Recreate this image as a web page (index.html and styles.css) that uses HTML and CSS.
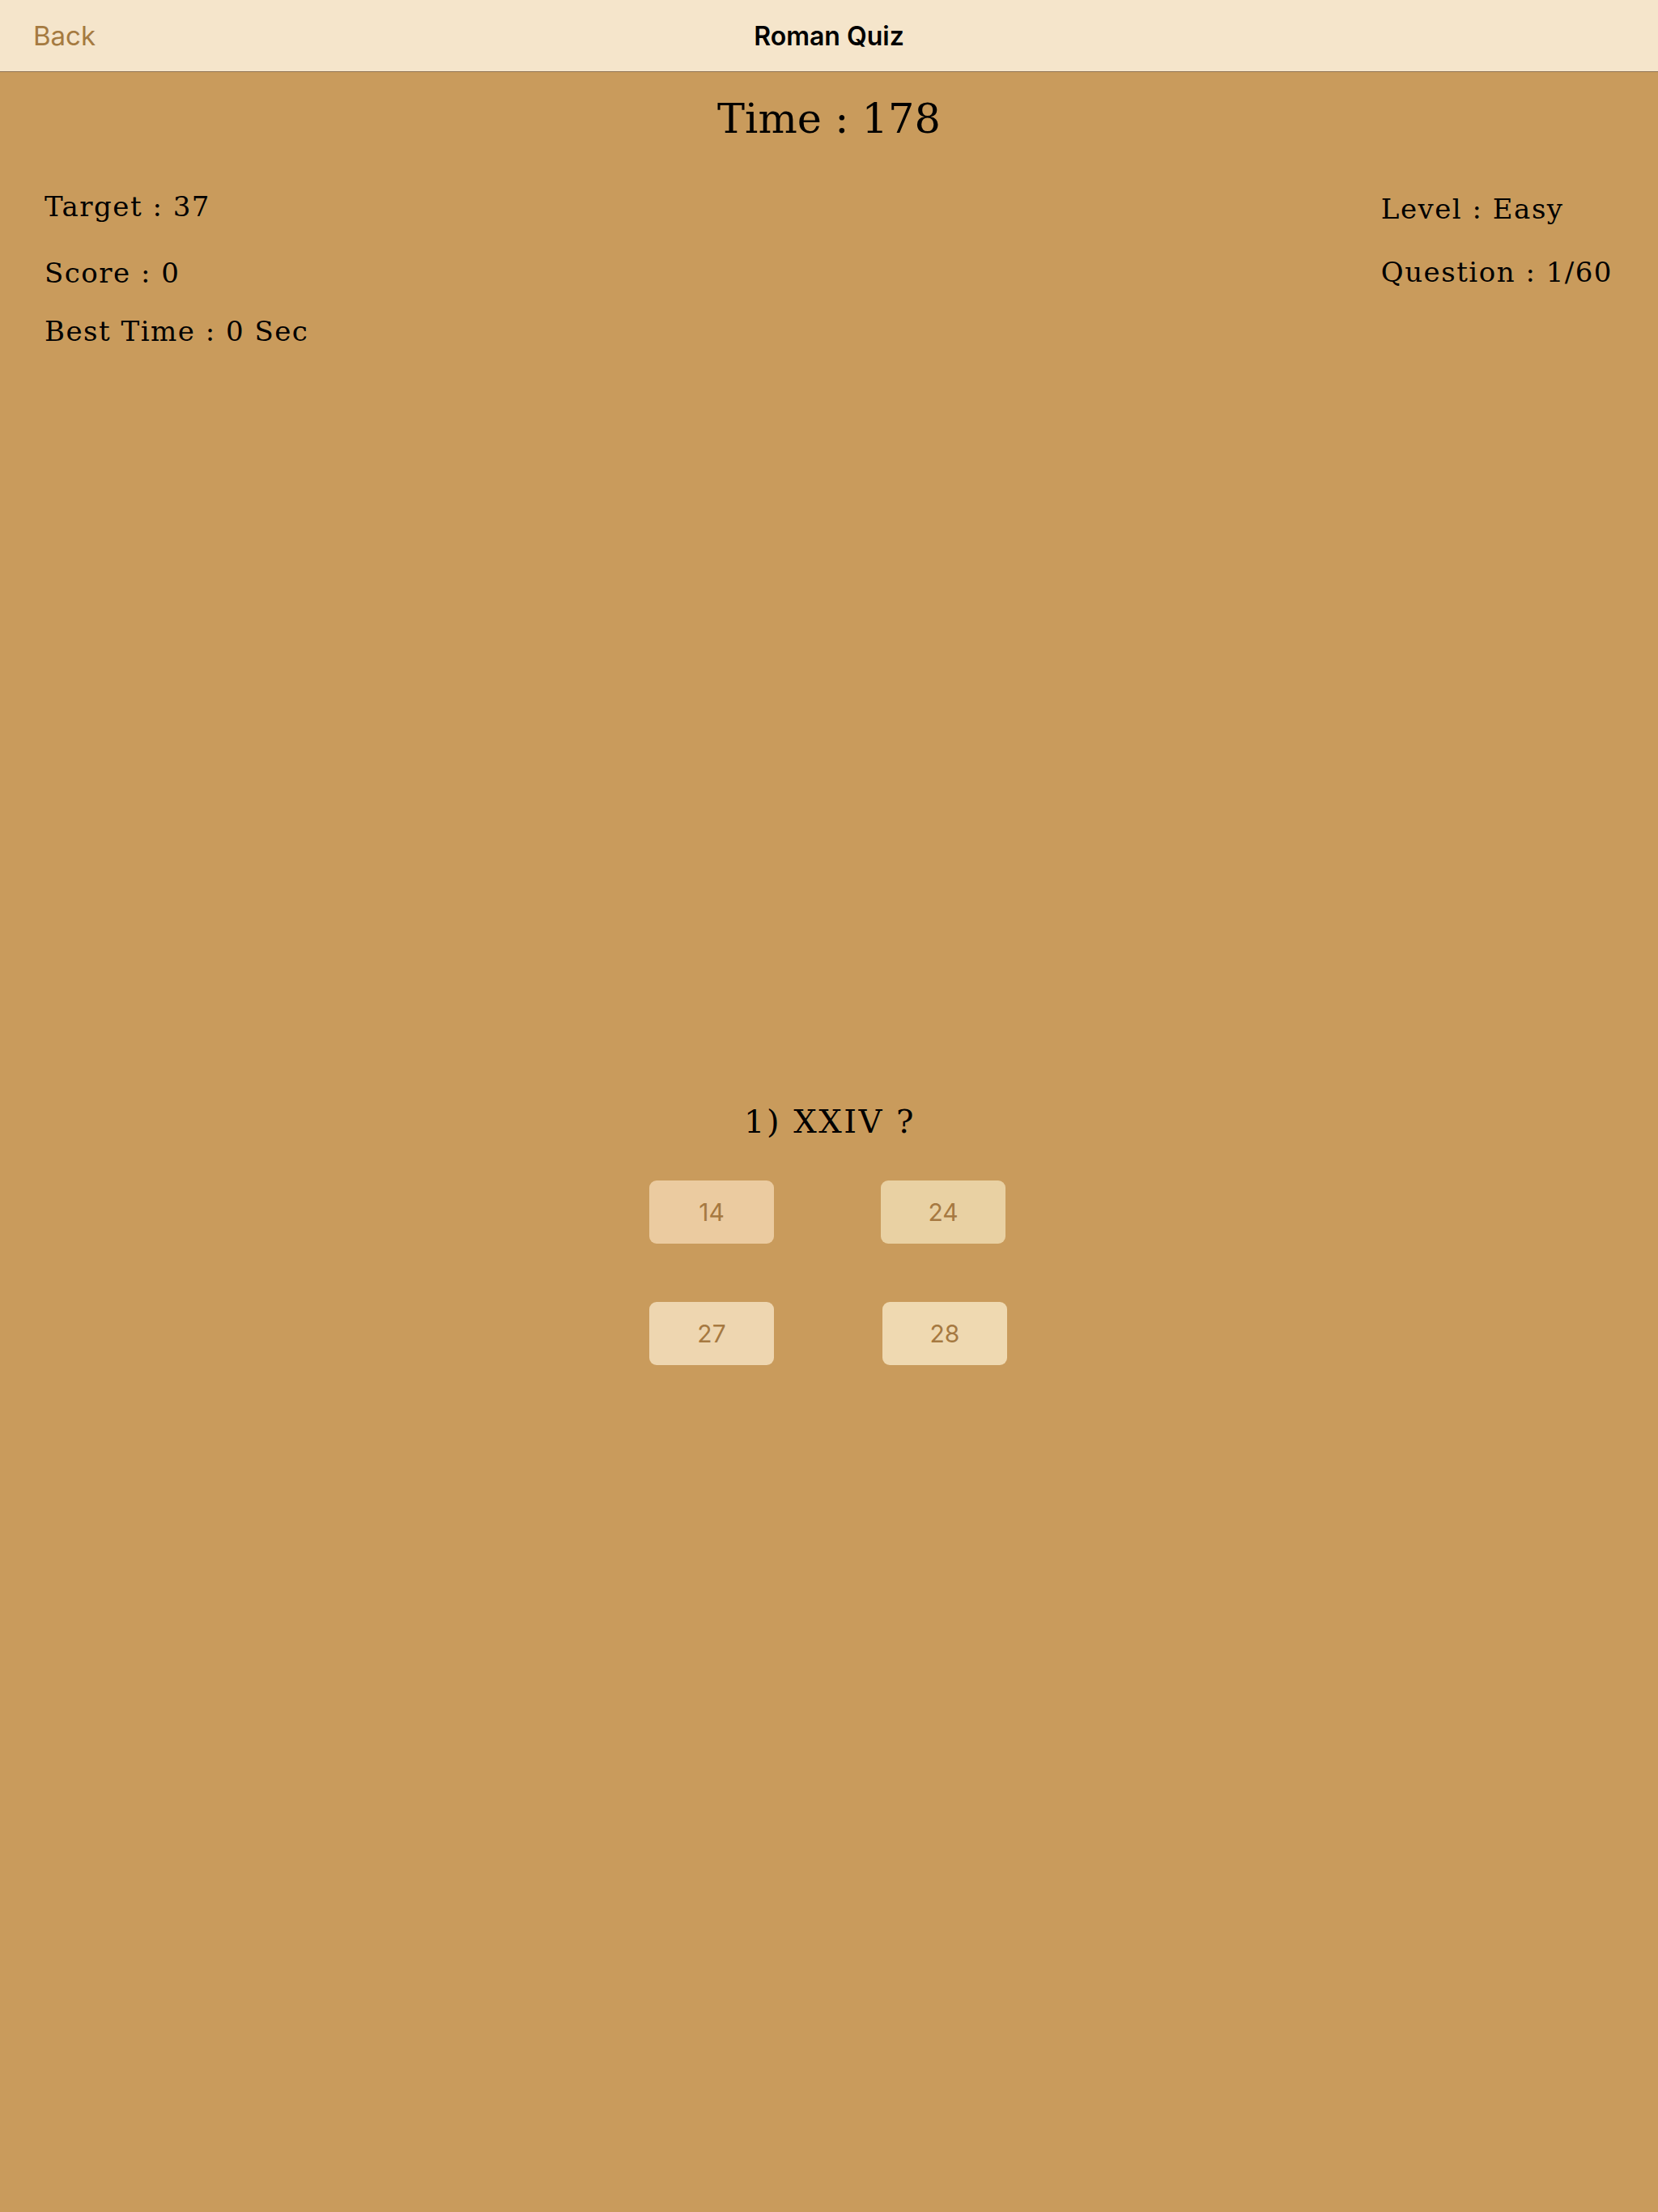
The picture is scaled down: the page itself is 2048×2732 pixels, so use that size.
FILE: index.html
```html
<!DOCTYPE html>
<html>
<head>
<meta charset="utf-8">
<title>Roman Quiz</title>
<link rel="stylesheet" href="styles.css">
</head>
<body>
<header class="navbar">
  <div class="nav-left"><span class="back">Back</span></div>
  <div class="nav-title">Roman Quiz</div>
  <div class="nav-right"></div>
</header>
<main class="game">
  <div class="timer">Time : 178</div>
  <section class="stats">
    <div class="stats-col">
      <div class="stat stat-target">Target : 37</div>
      <div class="stat stat-score">Score : 0</div>
      <div class="stat stat-best">Best Time : 0 Sec</div>
    </div>
    <div class="stats-col">
      <div class="stat stat-level">Level : Easy</div>
      <div class="stat stat-question">Question : 1/60</div>
    </div>
  </section>
  <section class="quiz">
    <div class="question">1) XXIV ?</div>
    <div class="answers">
      <div class="answer-row">
        <button class="answer a1">14</button>
        <button class="answer a2">24</button>
      </div>
      <div class="answer-row row-two">
        <button class="answer a3">27</button>
        <button class="answer a4">28</button>
      </div>
    </div>
  </section>
</main>
</body>
</html>
```
FILE: styles.css
```css
html, body {
  margin: 0;
  padding: 0;
}
body {
  background: #c99b5c;
  width: 2048px;
  min-height: 2732px;
  font-family: "DejaVu Serif", "Liberation Serif", serif;
  color: #000;
}
.navbar {
  height: 88px;
  background: #f5e5cb;
  border-bottom: 1px solid #8f7352;
  display: grid;
  grid-template-columns: 1fr auto 1fr;
  align-items: center;
  font-family: Inter, "Open Sans", sans-serif;
}
.nav-left {
  padding-left: 41px;
}
.back {
  color: #a57a40;
  font-size: 33px;
  font-weight: 400;
}
.nav-title {
  font-size: 32px;
  font-weight: 600;
  color: #000;
}
.game {
  display: flex;
  flex-direction: column;
}
.timer {
  margin-top: 32px;
  font-size: 51px;
  line-height: 1;
  text-align: center;
}
.stats {
  display: flex;
  justify-content: space-between;
  padding: 0 56px 0 55px;
}
.stats-col {
  display: flex;
  flex-direction: column;
}
.stat {
  font-size: 34px;
  line-height: 1;
  letter-spacing: 1.5px;
  white-space: nowrap;
}
.stat-target { margin-top: 66px; }
.stat-score { margin-top: 48px; }
.stat-best { margin-top: 38px; }
.stat-level { margin-top: 69px; }
.stat-question { margin-top: 44px; }
.quiz {
  display: flex;
  flex-direction: column;
  align-items: center;
  margin-top: 939px;
}
.question {
  font-size: 40px;
  line-height: 1;
  letter-spacing: 2.5px;
  padding-left: 2px;
}
.answers {
  margin-top: 53px;
  display: flex;
  flex-direction: column;
  gap: 72px;
}
.answer-row {
  display: flex;
  gap: 132px;
  padding-right: 4px;
}
.answer-row.row-two {
  gap: 134px;
  padding-right: 0;
}
.answer {
  width: 154px;
  height: 78px;
  border: none;
  border-radius: 9px;
  font-family: Inter, "Open Sans", sans-serif;
  font-size: 30px;
  color: #a67941;
  padding: 0;
}
.a1 { background: #ebcba0; }
.a2 { background: #e9d1a3; }
.a3 { background: #eed6b0; }
.a4 { background: #efd9b1; }
```
